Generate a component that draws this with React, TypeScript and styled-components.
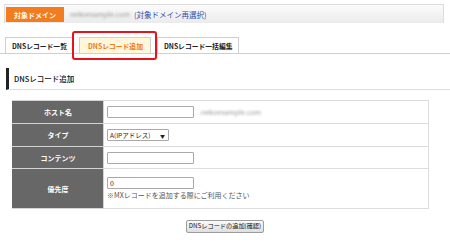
import styled, { createGlobalStyle } from "styled-components";

const GlobalStyle = createGlobalStyle`
  body {
    margin: 0;
    background: #fff;
    font-family: "Noto Sans CJK JP", "Noto Sans", sans-serif;
    color: #333;
  }
`;

const tabs = [
  { label: "DNSレコード一覧", active: false },
  { label: "DNSレコード追加", active: true },
  { label: "DNSレコード一括編集", active: false },
];

function App() {
  return (
    <Page>
      <GlobalStyle />
      <DomainBar>
        <DomainLabel>対象ドメイン</DomainLabel>
        <Blurred>nekoexample.com</Blurred>
        <Reselect>(対象ドメイン再選択)</Reselect>
      </DomainBar>
      <Tabs>
        {tabs.map((t) => (
          <Tab key={t.label} $active={t.active}>
            {t.label}
          </Tab>
        ))}
      </Tabs>
      <Heading>DNSレコード追加</Heading>
      <FormTable>
        <tbody>
          <Row $h={23}>
            <Label>ホスト名</Label>
            <Value>
              <Inline>
                <TextInput />
                <Blurred>.nekoexample.com</Blurred>
              </Inline>
            </Value>
          </Row>
          <Row $h={23}>
            <Label>タイプ</Label>
            <Value>
              <Select>
                <span>A(IPアドレス)</span>
                <Caret>▼</Caret>
              </Select>
            </Value>
          </Row>
          <Row $h={22}>
            <Label>コンテンツ</Label>
            <Value>
              <TextInput />
            </Value>
          </Row>
          <Row $h={40}>
            <Label>優先度</Label>
            <Value>
              <TextInput defaultValue="0" />
              <Note>※MXレコードを追加する際にご利用ください</Note>
            </Value>
          </Row>
        </tbody>
      </FormTable>
      <Actions>
        <SubmitButton>DNSレコードの追加(確認)</SubmitButton>
      </Actions>
    </Page>
  );
}

export default App;

const Page = styled.div`
  width: 450px;
  height: 247px;
  padding-top: 4px;
  box-sizing: border-box;
  overflow: hidden;
`;

const DomainBar = styled.div`
  margin: 0 6px 0 4px;
  height: 19px;
  box-sizing: border-box;
  border: 1px solid #dcdcdc;
  border-bottom: none;
  background: linear-gradient(#fbfbfb, #ebebeb);
  display: flex;
  align-items: flex-end;
  padding-left: 1px;
  gap: 6px;
`;

const DomainLabel = styled.div`
  background: #f27c1e;
  color: #fff;
  font-weight: bold;
  font-size: 7px;
  height: 15px;
  width: 58px;
  display: flex;
  align-items: center;
  justify-content: center;
  margin-bottom: 1px;
`;

const Blurred = styled.span`
  color: #9a9a9a;
  font-size: 7px;
  filter: blur(1px);
  align-self: center;
`;

const Reselect = styled.span`
  color: #2c4ea6;
  font-size: 7.5px;
  align-self: center;
  margin-left: -2px;
`;

const Tabs = styled.div`
  margin-top: 14px;
  padding-left: 5px;
  display: flex;
  gap: 6px;
  border-bottom: 1px solid #cfcfcf;
  height: 16px;
`;

const Tab = styled.div<{ $active: boolean }>`
  position: relative;
  height: 16px;
  box-sizing: border-box;
  padding: ${(p) => (p.$active ? "0 7px 0 8px" : "0 5px 0 6px")};
  border: 1px solid #cfcfcf;
  border-bottom: none;
  font-size: 6.8px;
  font-weight: bold;
  display: flex;
  align-items: center;
  color: ${(p) => (p.$active ? "#ee7a14" : "#222")};
  background: ${(p) => (p.$active ? "#fff6dc" : "#fff")};
  ${(p) =>
    p.$active &&
    `
    &::after {
      content: "";
      position: absolute;
      left: -8px;
      right: -7px;
      top: -7px;
      bottom: -7px;
      border: 2px solid #e8121b;
      border-radius: 3px;
    }
  `}
`;

const Heading = styled.h2`
  margin: 14px 0 0 6px;
  height: 22px;
  box-sizing: border-box;
  border-left: 3px solid #222;
  border-bottom: 1px solid #dedede;
  padding-left: 5px;
  font-size: 7.5px;
  font-weight: 500;
  color: #111;
  display: flex;
  align-items: center;
`;

const FormTable = styled.table`
  margin: 10px 0 0 12px;
  width: 417px;
  border-collapse: collapse;
`;

const Row = styled.tr<{ $h: number }>`
  height: ${(p) => p.$h}px;
`;

const Label = styled.th`
  width: 90px;
  padding: 0;
  background: #676767;
  color: #fff;
  font-size: 7px;
  font-weight: bold;
  border: 1px solid #d4d4d4;
  border-left-color: #676767;
`;

const Value = styled.td`
  padding: 0 0 0 3px;
  border: 1px solid #dcdcdc;
  vertical-align: middle;
`;

const Inline = styled.div`
  display: flex;
  align-items: center;
  gap: 5px;
`;

const TextInput = styled.input`
  display: block;
  width: 87px;
  height: 12px;
  box-sizing: border-box;
  border: 1px solid #a9a9a9;
  border-radius: 1px;
  padding: 0 2px;
  font-size: 7px;
  font-family: "Noto Sans CJK JP", sans-serif;
  color: #222;
  outline: none;
`;

const Select = styled.div`
  width: 62px;
  height: 12px;
  box-sizing: border-box;
  border: 1px solid #a9a9a9;
  border-radius: 1px;
  padding: 0 3px 0 2px;
  font-size: 6.5px;
  color: #222;
  display: flex;
  align-items: center;
  justify-content: space-between;
`;

const Caret = styled.span`
  font-size: 5px;
  color: #222;
`;

const Note = styled.div`
  font-size: 7px;
  color: #555;
  margin-top: 1px;
`;

const Actions = styled.div`
  display: flex;
  justify-content: center;
  margin-top: 11px;
`;

const SubmitButton = styled.button`
  height: 13px;
  padding: 0 2px;
  border: 1px solid #9c9c9c;
  border-radius: 2px;
  background: linear-gradient(#fafafa, #dedede);
  font-size: 6.2px;
  font-family: "Noto Sans CJK JP", sans-serif;
  color: #111;
  line-height: 1;
  display: flex;
  align-items: center;
`;
